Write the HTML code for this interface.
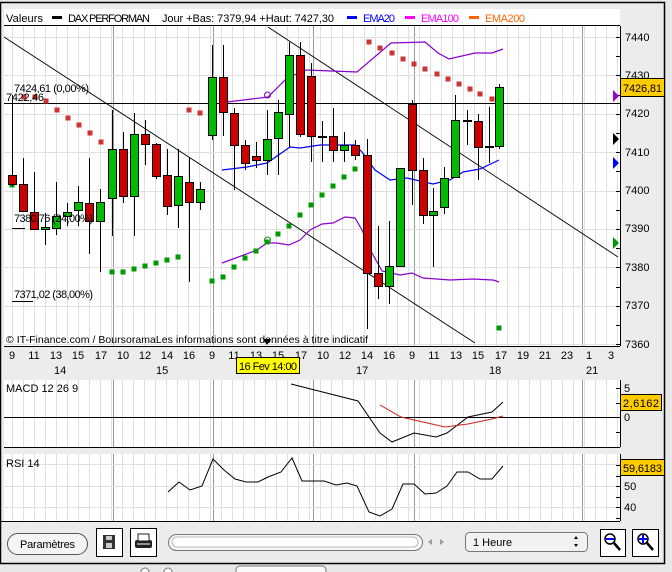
<!DOCTYPE html>
<html><head><meta charset="utf-8"><style>
html,body{margin:0;padding:0;background:#e8e8e8;width:672px;height:572px;overflow:hidden}
svg{display:block}
text{font-family:"Liberation Sans Narrow","Liberation Sans",sans-serif;font-size:11px;fill:#000}
</style></head><body>
<svg id="s" width="672" height="572" xmlns="http://www.w3.org/2000/svg">
<rect x="0" y="0" width="672" height="572" fill="#e8e8e8"/>
<rect x="0.5" y="2.5" width="664" height="561" fill="#ececec" stroke="#000" stroke-width="1.5"/>
<rect x="4" y="9" width="616" height="338" fill="#fff"/>
<rect x="4" y="380" width="616" height="67" fill="#fff"/>
<rect x="4" y="454" width="616" height="67" fill="#fff"/>
<g id="grid"></g>
<g id="shapes"></g>
<!-- header -->
<line x1="4" y1="25.5" x2="620" y2="25.5" stroke="#000"/>
<text x="6" y="22" textLength="37">Valeurs</text>
<rect x="52" y="16" width="10" height="3" fill="#000"/>
<text x="68" y="22" textLength="82">DAX PERFORMAN</text>
<text x="162" y="22" textLength="172">Jour +Bas: 7379,94 +Haut: 7427,30</text>
<rect x="347" y="16" width="10" height="3" fill="#0000ff"/>
<text x="363" y="22" style="fill:#0000ff" textLength="32">EMA20</text>
<rect x="405" y="16" width="10" height="3" fill="#ff00ff"/>
<text x="421" y="22" style="fill:#ff00ff" textLength="38">EMA100</text>
<rect x="469" y="16" width="10" height="3" fill="#ff6600"/>
<text x="485" y="22" style="fill:#ff6600" textLength="40">EMA200</text>
<!-- fib labels -->
<text x="14" y="92" textLength="75">7424,61 (0,00%)</text>
<text x="6" y="101" textLength="38">7422,46</text>
<text x="14" y="222" textLength="79">7380,76 (24,00%)</text>
<line x1="12" y1="228.5" x2="25" y2="228.5" stroke="#000"/>
<text x="14" y="298" textLength="79">7371,02 (38,00%)</text>
<line x1="12" y1="301.5" x2="33" y2="301.5" stroke="#000"/>
<text x="6" y="343" style="font-size:10.5px" textLength="362">© IT-Finance.com / BoursoramaLes informations sont données à titre indicatif</text>
<path d="M263 339 L271 339 L267 345 Z" fill="#000"/>
<!-- price axis -->
<g id="axis"></g>
<text x="625" y="41">7440</text><text x="625" y="79">7430</text>
<text x="625" y="117">7420</text><text x="625" y="156">7410</text>
<text x="625" y="194">7400</text><text x="625" y="232">7390</text>
<text x="625" y="271">7380</text><text x="625" y="309">7370</text>
<text x="625" y="348">7360</text>
<rect x="620.5" y="78.5" width="44" height="18" fill="#ffcc00" stroke="#000"/>
<text x="623" y="92" textLength="39">7426,81</text>
<path d="M613 90 L619 96 L613 102 Z" fill="#9900cc"/>
<path d="M613 133 L619 139 L613 145 Z" fill="#000"/>
<path d="M613 157 L619 163 L613 169 Z" fill="#0000ff"/>
<path d="M613 237 L619 243 L613 249 Z" fill="#009900"/>
<!-- x axis -->
<line x1="4" y1="346.5" x2="620" y2="346.5" stroke="#000"/>
<g id="xl"></g>
<text x="54" y="374">14</text><text x="156" y="374">15</text>
<text x="356" y="374">17</text><text x="489" y="374">18</text><text x="586" y="374">21</text>
<rect x="236.5" y="357.5" width="63" height="16" fill="#ffff00" stroke="#000"/>
<text x="239" y="370" textLength="58">16 Fev 14:00</text>
<!-- MACD -->
<text x="6" y="392">MACD 12 26 9</text>
<text x="624" y="392">5</text><text x="624" y="421">0</text>
<rect x="620.5" y="394.5" width="41" height="16" fill="#ffcc00" stroke="#000"/>
<text x="623" y="407" textLength="36">2,6162</text>
<!-- RSI -->
<text x="6" y="467">RSI 14</text>
<text x="624" y="490">50</text><text x="624" y="511">40</text>
<rect x="620.5" y="459.5" width="44" height="16" fill="#ffcc00" stroke="#000"/>
<text x="623" y="472" textLength="39">59,6183</text>
<!-- toolbar -->
<line x1="0" y1="521.5" x2="620" y2="521.5" stroke="#000"/>
<rect x="7.5" y="533.5" width="80" height="21" rx="10.5" fill="#f4f4f4" stroke="#555"/>
<text x="20" y="548" textLength="55">Paramètres</text>
<rect x="96.5" y="528.5" width="26" height="28" fill="#fff" stroke="#000"/>
<rect x="103" y="535" width="12" height="14" fill="#333"/><rect x="106" y="536" width="6" height="4" fill="#ccc"/><rect x="106" y="543" width="6" height="5" fill="#ccc"/>
<rect x="130.5" y="528.5" width="26" height="28" fill="#fff" stroke="#000"/>
<rect x="135" y="540" width="17" height="8" rx="2" fill="#222"/><rect x="138" y="534" width="11" height="7" fill="#fff" stroke="#222"/><line x1="137" y1="544" x2="150" y2="544" stroke="#fff"/>
<rect x="168.5" y="534.5" width="254" height="16" rx="8" fill="#f8f8f8" stroke="#777"/>
<rect x="172" y="537" width="246" height="10" rx="5" fill="#fff" stroke="#bbb"/>
<path d="M428 542 L432 539 L432 545 Z" fill="#999"/><path d="M444 542 L440 539 L440 545 Z" fill="#999"/>
<rect x="465.5" y="532.5" width="122" height="19" rx="4" fill="#f2f2f2" stroke="#777"/>
<text x="473" y="546">1 Heure</text>
<path d="M574 539 L576 536 L578 539 Z M574 544 L576 547 L578 544 Z" fill="#000"/>
<rect x="600.5" y="529.5" width="25" height="27" fill="#fff" stroke="#000"/>
<rect x="632.5" y="529.5" width="26" height="27" fill="#fff" stroke="#000"/>
<circle cx="610" cy="539" r="5" fill="#fff" stroke="#000" stroke-width="1.5"/><line x1="606" y1="539" x2="614" y2="539" stroke="#00f" stroke-width="2"/><line x1="614" y1="543" x2="620" y2="550" stroke="#000" stroke-width="2.5"/>
<circle cx="643" cy="539" r="5" fill="#fff" stroke="#000" stroke-width="1.5"/><path d="M639 539 H647 M643 535 V543" stroke="#00f" stroke-width="2"/><line x1="647" y1="543" x2="653" y2="550" stroke="#000" stroke-width="2.5"/>
<!-- below frame bits -->
<rect x="236" y="566" width="90" height="10" rx="4" fill="#fafafa" stroke="#777"/>
<circle cx="145" cy="572" r="4" fill="#fff" stroke="#777"/><circle cx="168" cy="572" r="4" fill="#fff" stroke="#777"/>
</svg>
<script>
var NS="http://www.w3.org/2000/svg";
function el(p,t,a){var e=document.createElementNS(NS,t);for(var k in a)e.setAttribute(k,a[k]);document.getElementById(p).appendChild(e);return e;}
// grid
for(var x=12;x<620;x+=11){
  [[26,346],[380,447],[454,521]].forEach(function(r){el('grid','line',{x1:x+.5,y1:r[0],x2:x+.5,y2:r[1],stroke:'#e0e0e0'});});
}
[113,213,313,414,582].forEach(function(x){[[26,346],[380,447],[454,521]].forEach(function(r){el('grid','line',{x1:x+.5,y1:r[0],x2:x+.5,y2:r[1],stroke:'#9a9a9a'});});});
for(var y=37;y<346;y+=38.4){el('grid','line',{x1:4,y1:Math.round(y)+.5,x2:620,y2:Math.round(y)+.5,stroke:'#e0e0e0'});}
[464,486,507].forEach(function(y){el('grid','line',{x1:4,y1:y+.5,x2:620,y2:y+.5,stroke:'#e0e0e0'});});
el('grid','line',{x1:4,y1:417.5,x2:620,y2:417.5,stroke:'#000'});
el('grid','line',{x1:4,y1:447.5,x2:620,y2:447.5,stroke:'#000'});
el('grid','line',{x1:4,y1:521.5,x2:620,y2:521.5,stroke:'#000'});
// axes
[[26,346],[380,447],[454,521]].forEach(function(r){el('axis','line',{x1:620.5,y1:r[0],x2:620.5,y2:r[1],stroke:'#000'});});
for(var y=37;y<346;y+=19.2){el('axis','line',{x1:616,y1:Math.round(y)+.5,x2:621,y2:Math.round(y)+.5,stroke:'#000'});}
[388,403,417,432].forEach(function(y){el('axis','line',{x1:616,y1:y+.5,x2:621,y2:y+.5,stroke:'#000'});});
[465,476,486,497,507,518].forEach(function(y){el('axis','line',{x1:616,y1:y+.5,x2:621,y2:y+.5,stroke:'#000'});});
// x labels
var hl=['9','11','13','15','17','10','12','14','16','9','11','13','15','17','10','12','14','16','9','11','13','15','17','19','21','23','1','3'];
hl.forEach(function(t,i){var x=[12,34,56,78,101,123,145,167,189,212,234,256,278,301,323,345,367,389,412,434,456,478,501,523,545,567,589,611][i];var e=el('xl','text',{x:x,y:359,'text-anchor':'middle'});e.textContent=t;});
// trend lines & horizontal
el('shapes','line',{x1:4,y1:103.5,x2:620,y2:103.5,stroke:'#000'});
el('shapes','line',{x1:4,y1:37,x2:475,y2:343,stroke:'#000','stroke-width':0.9});
el('shapes','line',{x1:268,y1:27,x2:618,y2:257,stroke:'#000','stroke-width':0.9});
function pl(pts,c){el('shapes','polyline',{points:pts,fill:'none',stroke:c,'stroke-width':1.2});}
pl('227,102 268,97 287,78 306,70 357,72 391,43 425,42 438,53 449,59 475,53 492,53 503,49','#8800cc');
pl('222,263 233,259 257,250 267,243 277,243 289,245 300,240 310,230 322,224 333,223 345,217 355,218 362,230 372,253 382,271 400,275 412,273 423,278 450,280 473,279 493,280 499,282','#8800cc');
pl('222,170 247,167 267,163 290,147 300,148 320,145 355,145 362,152 375,170 390,180 407,178 433,184 450,180 463,172 480,169 499,160','#0000ff');
// SAR dots
var red=[[24,97],[35,97],[46,101],[57,110],[68,118],[79,125],[90,133],[101,142],[189,110],[200,113],[369,42],[380,48],[392,53],[403,59],[414,64],[425,69],[437,74],[448,79],[459,84],[470,89],[480,94],[492,99]];
red.forEach(function(p){el('shapes','rect',{x:p[0]-2.5,y:p[1]-2.5,width:5,height:5,fill:'#cc3333'});});
var gr=[[12,185],[112,272],[123,272],[134,269],[145,266],[156,263],[167,260],[178,257],[212,281],[223,277],[234,267],[245,258],[256,251],[267,242],[278,234],[289,226],[300,215],[311,205],[322,195],[333,186],[344,177],[355,169],[499,328]];
gr.forEach(function(p){el('shapes','rect',{x:p[0]-2.5,y:p[1]-2.5,width:5,height:5,fill:'#009900'});});
// candles [x, top, bottom, high, low, color]
var C=[[12,175,184,95,186,'r'],[23,184,211,158,211,'r'],[34,212,229,172,229,'r'],[45,227,229,213,245,'g'],[56,216,228,182,235,'g'],[67,212,216,203,226,'g'],[78,202,210,186,226,'g'],[89,203,221,158,254,'r'],[100,202,221,189,272,'g'],
[112,149,198,110,236,'g'],[123,149,196,132,203,'r'],[134,134,196,113,236,'g'],[145,134,144,120,165,'r'],[156,144,176,143,179,'r'],[167,175,206,149,215,'r'],[178,176,205,149,228,'g'],[189,182,202,157,282,'r'],[200,189,202,182,210,'g'],
[212,77,135,45,140,'g'],[223,77,112,45,136,'r'],[234,113,145,108,190,'r'],[245,145,163,140,170,'r'],[256,156,160,142,168,'r'],[267,139,160,110,175,'g'],[278,112,138,100,175,'g'],[289,55,114,42,147,'g'],[300,55,134,42,137,'r'],[311,76,136,63,162,'r'],
[322,137,137,121,162,'d'],[333,136,150,108,162,'r'],[344,145,150,132,162,'g'],[355,145,155,140,160,'r'],[367,155,273,139,329,'r'],[378,273,286,226,299,'r'],[389,266,286,221,304,'g'],[400,168,266,168,267,'g'],
[412,104,170,100,205,'r'],[423,170,215,158,224,'r'],[433,211,215,188,267,'g'],[444,178,207,167,214,'g'],[455,120,177,95,178,'g'],[467,121,121,110,145,'d'],[478,121,147,114,180,'r'],[489,147,147,107,163,'d'],[499,87,146,84,149,'g']];
C.forEach(function(c){
 el('shapes','line',{x1:c[0]+.5,y1:c[3],x2:c[0]+.5,y2:c[4],stroke:'#000'});
 if(c[5]=='d'){el('shapes','rect',{x:c[0]-4,y:c[1]-1,width:9,height:2,fill:'#000'});return;}
 el('shapes','rect',{x:c[0]-3.5,y:c[1]+.5,width:8,height:Math.max(1,c[2]-c[1]),fill:c[5]=='g'?'#00bb00':'#cc0000',stroke:'#000'});
});
el('shapes','circle',{cx:267.5,cy:95,r:3,fill:'none',stroke:'#8800cc'});
el('shapes','circle',{cx:267.5,cy:240,r:3,fill:'none',stroke:'#009900'});
// MACD
function pl2(pts,c){el('shapes','polyline',{points:pts,fill:'none',stroke:c,'stroke-width':1});}
pl2('291,384 358,401 380,433 392,442 414,433 436,437 447,433 468,417 492,412 503,402','#000');
pl2('380,405 401,417 445,427 468,424 492,419 503,416','#cc2222');
pl2('168,492 179,482 190,490 202,486 213,459 224,470 235,479 246,482 258,482 268,477 281,472 292,458 302,481 324,481 336,485 347,483 357,486 369,512 380,516 392,509 403,484 414,484 425,494 436,493 447,486 457,472 468,472 480,479 492,479 503,466','#000');
</script>
</body></html>
